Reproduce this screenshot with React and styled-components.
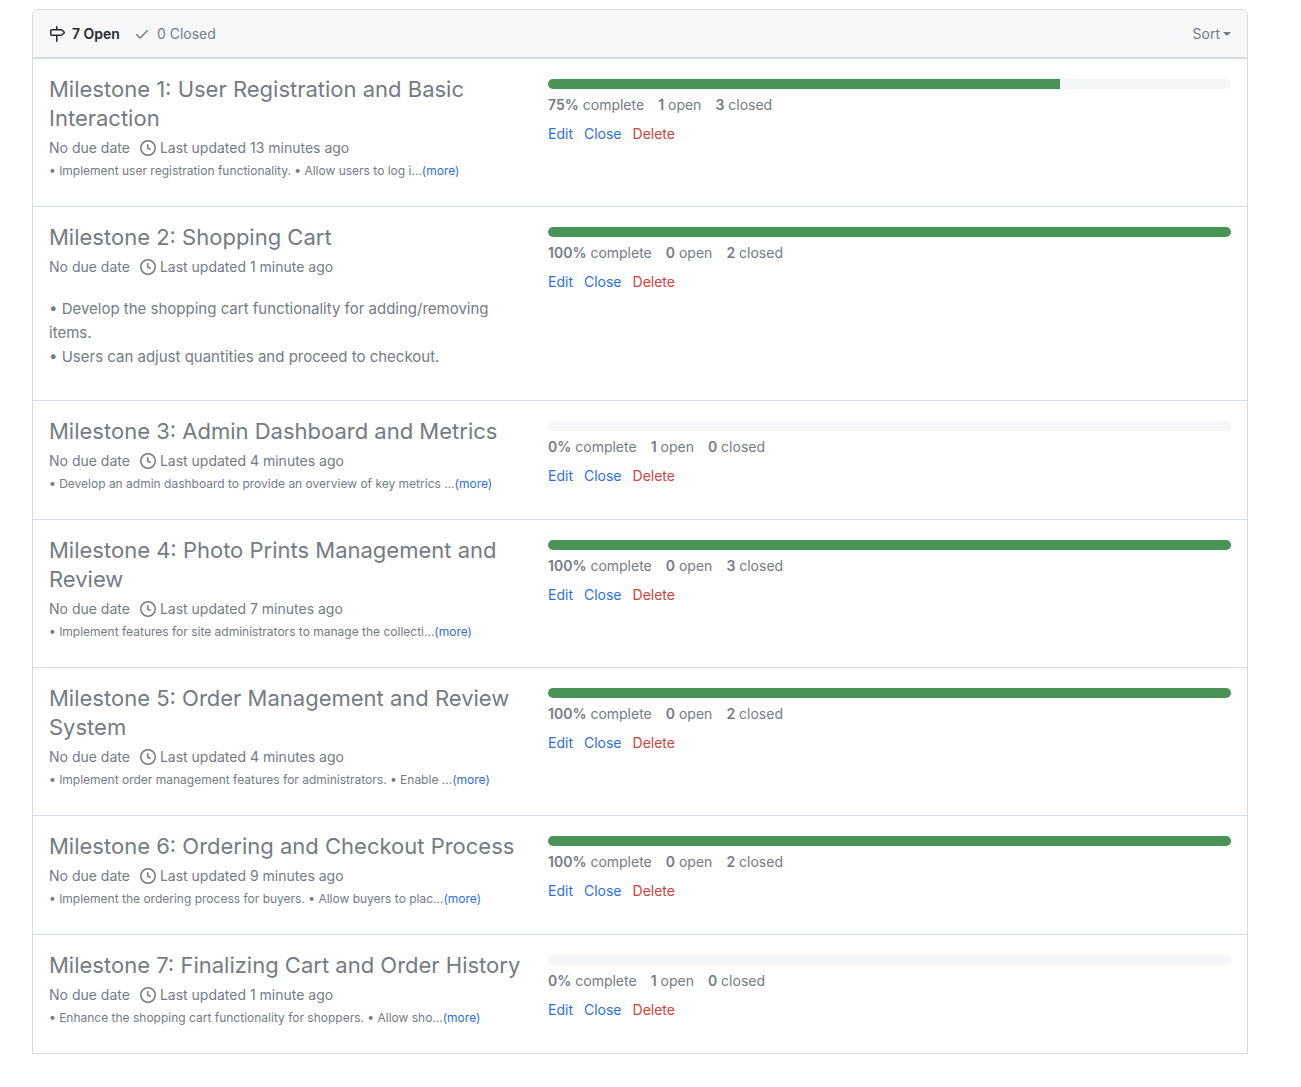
import React from "react";
import styled, { createGlobalStyle } from "styled-components";

const GlobalStyle = createGlobalStyle`
  * { box-sizing: border-box; }
  body {
    margin: 0;
    background: #ffffff;
    color: #737b83;
    font-family: Inter, "Liberation Sans", sans-serif;
    font-size: 14px;
    line-height: 21px;
  }
`;

const Page = styled.main`
  padding: 9px 53px 32px 32px;
`;

const Panel = styled.section`
  border: 1px solid #d6dbe2;
  border-radius: 6px 6px 0 0;
`;

const Header = styled.header`
  display: flex;
  align-items: center;
  justify-content: space-between;
  height: 48px;
  padding: 0 16px;
  background: #f7f8fa;
  border-bottom: 1px solid #d6dbe2;
  border-radius: 6px 6px 0 0;
`;

const Filters = styled.nav`
  display: flex;
  gap: 14px;
`;

const FilterLink = styled.a`
  display: flex;
  align-items: center;
  gap: 7px;
  color: ${(p) => (p.$selected ? "#24292e" : "#737b83")};
  font-weight: ${(p) => (p.$selected ? 600 : 400)};
  text-decoration: none;
`;

const Icon = styled.svg`
  flex: none;
  width: 16px;
  height: 16px;
  fill: currentColor;
`;

const SortButton = styled.button`
  display: flex;
  align-items: center;
  gap: 3px;
  padding: 0;
  border: 0;
  background: none;
  color: inherit;
  font: inherit;
  cursor: pointer;

  &::after {
    content: "";
    border: 4px solid transparent;
    border-top-color: currentColor;
    border-bottom: 0;
  }
`;

const List = styled.ul`
  margin: 0;
  padding: 0;
  list-style: none;
`;

const Row = styled.li`
  display: grid;
  grid-template-columns: 499px minmax(0, 1fr);
  padding: 16px;
  border-top: 1px solid #d6dbe2;
`;

const Summary = styled.div`
  padding-right: 20px;
`;

const Title = styled.h2`
  margin: 0;
  font-size: 22px;
  font-weight: 400;
  line-height: 29px;
`;

const TitleLink = styled.a`
  color: inherit;
  text-decoration: none;
`;

const Meta = styled.div`
  display: flex;
  gap: 10px;
  margin-top: 4px;
`;

const Updated = styled.span`
  display: flex;
  align-items: center;
  gap: 4px;
`;

const Brief = styled.p`
  margin: 4px 0 10px;
  font-size: 12px;
  line-height: 18px;
  white-space: nowrap;
`;

const Description = styled.p`
  margin: 20px 0 15px;
  font-size: 15px;
  line-height: 24px;
`;

const TextButton = styled.button`
  padding: 0;
  border: 0;
  background: none;
  color: ${(p) => (p.$danger ? "#d04440" : "#2f6fdc")};
  font: inherit;
  cursor: pointer;
`;

const ActionLink = styled.a`
  color: #2f6fdc;
  text-decoration: none;
`;

const Track = styled.div`
  height: 10px;
  margin-top: 4px;
  overflow: hidden;
  border-radius: 6px;
  background: #f5f6f8;
`;

const Fill = styled.div`
  height: 100%;
  background: #489355;
`;

const Stats = styled.div`
  display: flex;
  gap: 14px;
  margin-top: 5px;

  b { font-weight: 600; }
`;

const Actions = styled.div`
  display: flex;
  gap: 11px;
  margin-top: 8px;
`;

const MilestoneIcon = () => (
  <Icon viewBox="0 0 16 16" aria-hidden="true">
    <path d="M7.75 0a.75.75 0 0 1 .75.75V3h3.634c.414 0 .814.147 1.13.414l2.07 1.75a1.75 1.75 0 0 1 0 2.672l-2.07 1.75a1.75 1.75 0 0 1-1.13.414H8.5v5.25a.75.75 0 0 1-1.5 0V10H2.75A1.75 1.75 0 0 1 1 8.25v-3.5C1 3.784 1.784 3 2.75 3H7V.75A.75.75 0 0 1 7.75 0Zm4.384 8.5a.25.25 0 0 0 .161-.06l2.07-1.75a.248.248 0 0 0 0-.38l-2.07-1.75a.25.25 0 0 0-.161-.06H2.75a.25.25 0 0 0-.25.25v3.5c0 .138.112.25.25.25h9.384Z" />
  </Icon>
);

const CheckIcon = () => (
  <Icon viewBox="0 0 16 16" aria-hidden="true">
    <path d="M13.78 4.22a.75.75 0 0 1 0 1.06l-7.25 7.25a.75.75 0 0 1-1.06 0L2.22 9.28a.75.75 0 0 1 1.06-1.06L6 10.94l6.72-6.72a.75.75 0 0 1 1.06 0Z" />
  </Icon>
);

const ClockIcon = () => (
  <Icon viewBox="0 0 16 16" aria-hidden="true">
    <path d="M8 0a8 8 0 1 1 0 16A8 8 0 0 1 8 0ZM1.5 8a6.5 6.5 0 1 0 13 0 6.5 6.5 0 0 0-13 0Zm7-3.25v2.992l2.028.812a.75.75 0 0 1-.557 1.392l-2.5-1A.751.751 0 0 1 7 8.25v-3.5a.75.75 0 0 1 1.5 0Z" />
  </Icon>
);

const milestones = [
  {
    title: "Milestone 1: User Registration and Basic Interaction",
    updated: "13 minutes ago",
    brief: "• Implement user registration functionality. • Allow users to log i...",
    percent: 75, open: 1, closed: 3,
  },
  {
    title: "Milestone 2: Shopping Cart",
    updated: "1 minute ago",
    lines: [
      "• Develop the shopping cart functionality for adding/removing items.",
      "• Users can adjust quantities and proceed to checkout.",
    ],
    percent: 100, open: 0, closed: 2,
  },
  {
    title: "Milestone 3: Admin Dashboard and Metrics",
    updated: "4 minutes ago",
    brief: "• Develop an admin dashboard to provide an overview of key metrics ...",
    percent: 0, open: 1, closed: 0,
  },
  {
    title: "Milestone 4: Photo Prints Management and Review",
    updated: "7 minutes ago",
    brief: "• Implement features for site administrators to manage the collecti...",
    percent: 100, open: 0, closed: 3,
  },
  {
    title: "Milestone 5: Order Management and Review System",
    updated: "4 minutes ago",
    brief: "• Implement order management features for administrators. • Enable ...",
    percent: 100, open: 0, closed: 2,
  },
  {
    title: "Milestone 6: Ordering and Checkout Process",
    updated: "9 minutes ago",
    brief: "• Implement the ordering process for buyers. • Allow buyers to plac...",
    percent: 100, open: 0, closed: 2,
  },
  {
    title: "Milestone 7: Finalizing Cart and Order History",
    updated: "1 minute ago",
    brief: "• Enhance the shopping cart functionality for shoppers. • Allow sho...",
    percent: 0, open: 1, closed: 0,
  },
];

const Milestone = ({ title, updated, brief, lines, percent, open, closed }) => (
  <Row>
    <Summary>
      <Title>
        <TitleLink href="#">{title}</TitleLink>
      </Title>
      <Meta>
        <span>No due date</span>
        <Updated>
          <ClockIcon />
          Last updated {updated}
        </Updated>
      </Meta>
      {brief && (
        <Brief>
          {brief}
          <TextButton type="button">(more)</TextButton>
        </Brief>
      )}
      {lines && (
        <Description>
          {lines.map((line, i) => (
            <React.Fragment key={line}>
              {i > 0 && <br />}
              {line}
            </React.Fragment>
          ))}
        </Description>
      )}
    </Summary>
    <div>
      <Track
        role="progressbar"
        aria-label={title}
        aria-valuenow={percent}
        aria-valuemin={0}
        aria-valuemax={100}
      >
        <Fill style={{ width: `${percent}%` }} />
      </Track>
      <Stats>
        <span><b>{percent}%</b> complete</span>
        <span><b>{open}</b> open</span>
        <span><b>{closed}</b> closed</span>
      </Stats>
      <Actions>
        <ActionLink href="#">Edit</ActionLink>
        <TextButton type="button">Close</TextButton>
        <TextButton type="button" $danger>Delete</TextButton>
      </Actions>
    </div>
  </Row>
);

export default function App() {
  return (
    <>
      <GlobalStyle />
      <Page>
        <Panel>
          <Header>
            <Filters>
              <FilterLink href="#" $selected>
                <MilestoneIcon />7 Open
              </FilterLink>
              <FilterLink href="#">
                <CheckIcon />0 Closed
              </FilterLink>
            </Filters>
            <SortButton type="button">Sort</SortButton>
          </Header>
          <List>
            {milestones.map((m) => (
              <Milestone key={m.title} {...m} />
            ))}
          </List>
        </Panel>
      </Page>
    </>
  );
}
